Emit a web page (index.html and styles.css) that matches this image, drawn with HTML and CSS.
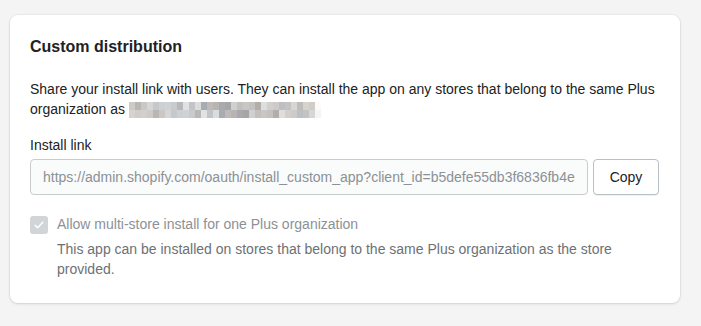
FILE: index.html
```html
<!DOCTYPE html>
<html lang="en">
<head>
  <meta charset="UTF-8">
  <title>Custom distribution</title>
  <link rel="stylesheet" href="styles.css">
</head>
<body>
  <div class="card">
    <h2 class="card-title">Custom distribution</h2>
    <p class="intro">
      Share your install link with users. They can install the app on any stores that belong to the same Plus
      organization as <span id="blurred" class="blurred"></span>
    </p>
    <label class="field-label" for="installLink">Install link</label>
    <div class="link-row">
      <input id="installLink" class="link-input" type="text" disabled
        value="https://admin.shopify.com/oauth/install_custom_app?client_id=b5defe55db3f6836fb4ee1a2c3">
      <button class="copy-btn">Copy</button>
    </div>
    <div class="check-row">
      <span class="checkbox">
        <svg viewBox="0 0 20 20" width="14" height="14"><path d="M4.5 10.5l3.5 3.5 7.5-8" fill="none" stroke="#fff" stroke-width="2" stroke-linecap="round" stroke-linejoin="round"/></svg>
      </span>
      <div class="check-text">
        <div class="check-label">Allow multi-store install for one Plus organization</div>
        <div class="check-help">This app can be installed on stores that belong to the same Plus organization as the store provided.</div>
      </div>
    </div>
  </div>

  <script>
    // pixelated placeholder for the hidden store name
    const shades = [
      '#cfcac6','#d3cfcc','#b7b4b2','#cdd0d3','#bfbcba','#c9c6c3','#c2c4c8','#b9b7b3',
      '#cccbc9','#a9aaad','#cfd1d2','#d6d3cf','#c4c2c0','#dcdcdc','#cac7c4','#bdbfc2',
      '#a6a5a7','#c8cbce','#d1ccc7','#b3aea9','#a7acb3','#d4d6d8','#c5c3c1','#d0d0d0',
      '#b8b8ba','#cfd0d2','#dedede','#bdbab7','#c6c8ca','#d6d6d6','#c3c1bf','#e2e2e2'
    ];
    const blur = document.getElementById('blurred');
    for (let row = 0; row < 2; row++) {
      for (let i = 0; i < 32; i++) {
        const cell = document.createElement('i');
        cell.style.background = shades[(i * 7 + row * 11) % shades.length];
        if (i == 31) cell.style.background = row ? '#f4f4f4' : '#fbfbfb';
        blur.appendChild(cell);
      }
    }
  </script>
</body>
</html>
```

FILE: styles.css
```css
body {
  margin: 0;
  background: #f4f4f4;
  font-family: 'Liberation Sans', Arial, sans-serif;
  color: #202223;
  padding: 15px 21px 23px 10px;
}
.card {
  background: #fff;
  border-radius: 8px;
  box-shadow: 0 0 0 1px rgba(0,0,0,0.03), 0 1px 3px rgba(0,0,0,0.12);
  padding: 20px 20px 21px 20px;
  height: 247px;
}
.card-title {
  margin: 0;
  font-size: 16px;
  font-weight: bold;
  line-height: 24px;
}
.intro {
  margin: 20px 0 0;
  font-size: 14px;
  line-height: 20px;
}
.blurred {
  display: inline-grid;
  grid-template-columns: repeat(32, 6px);
  grid-template-rows: 8px 8px;
  vertical-align: middle;
}
.blurred i {
  display: block;
}
.field-label {
  display: block;
  margin-top: 16px;
  font-size: 14px;
  line-height: 20px;
}
.link-row {
  display: flex;
  gap: 5px;
  margin-top: 4px;
}
.link-input {
  width: 558px;
  box-sizing: border-box;
  height: 36px;
  border: 1px solid #c9cccf;
  border-radius: 4px;
  background: #fafbfb;
  color: #8c9196;
  font-family: inherit;
  font-size: 14px;
  padding: 0 12px;
}
.copy-btn {
  width: 66px;
  height: 36px;
  border: 1px solid #babfc3;
  border-radius: 4px;
  background: #fff;
  box-shadow: 0 1px 0 rgba(0,0,0,0.06);
  font-family: inherit;
  font-size: 14px;
  color: #202223;
  padding: 0;
}
.check-row {
  display: flex;
  margin-top: 21px;
  gap: 9px;
}
.checkbox {
  width: 18px;
  height: 18px;
  flex: none;
  background: #d2d5d8;
  border-radius: 3px;
  display: flex;
  align-items: center;
  justify-content: center;
}
.check-text {
  font-size: 14px;
  line-height: 20px;
  color: #8c9196;
  margin-top: -2px;
}
.check-help {
  margin-top: 5px;
  color: #6d7175;
}
```
